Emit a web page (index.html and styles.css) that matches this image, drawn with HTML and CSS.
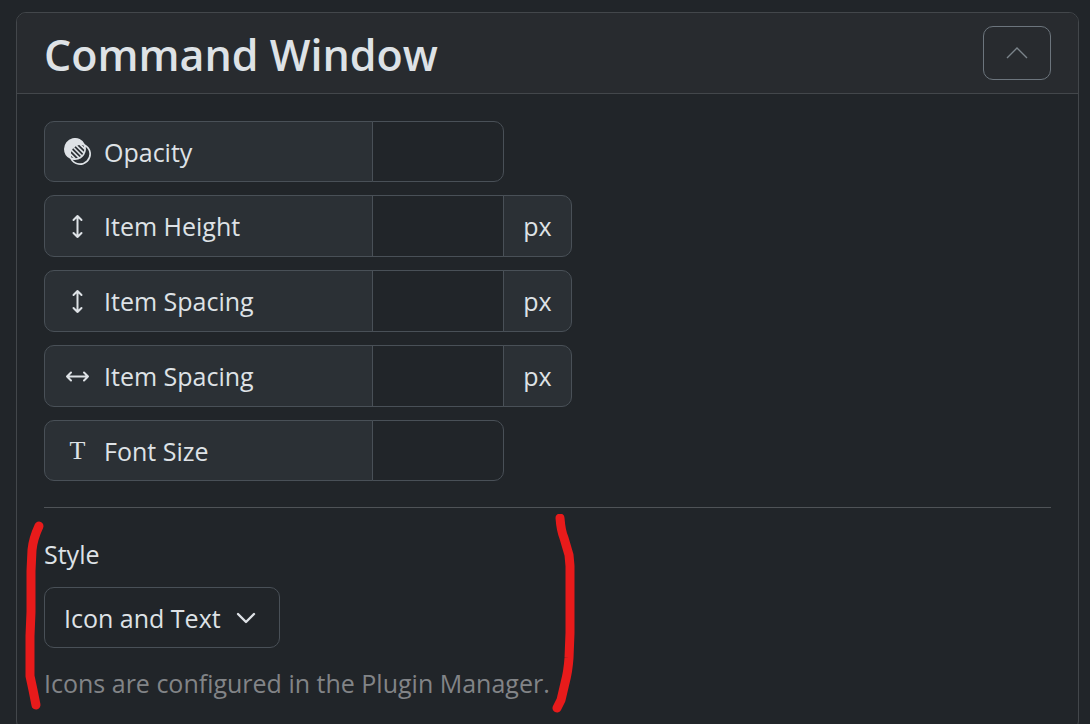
FILE: index.html
```html
<!DOCTYPE html>
<html lang="en">
<head>
    <meta charset="UTF-8">
    <meta name="viewport" content="width=device-width, initial-scale=1.0">
    <title>Command Window</title>
    <link rel="stylesheet" href="styles.css">
</head>
<body>
    <section class="card">
        <header class="card-header">
            <h1>Command Window</h1>
            <button type="button" class="collapse-btn" aria-label="Collapse">
                <svg width="28" height="28" viewBox="0 0 28 28"><path d="M4 19 14 9l10 10"/></svg>
            </button>
        </header>
        <div class="card-body">
            <form class="fields">
                <div class="input-group">
                    <label for="opacity">
                        <svg class="icon" viewBox="0 0 16 16"><path d="M0 6.5a6.5 6.5 0 0 1 12.346-2.846 6.5 6.5 0 1 1-8.691 8.691A6.5 6.5 0 0 1 0 6.5m5.144 6.358a5.5 5.5 0 1 0 7.714-7.714 6.5 6.5 0 0 1-7.714 7.714m-.733-1.269q.546.226 1.144.33l-1.474-1.474q.104.597.33 1.144m2.614.386a5.5 5.5 0 0 0 1.173-.242L4.374 7.91a6 6 0 0 0-.296 1.118zm2.157-.672q.446-.25.838-.576L5.418 6.126a6 6 0 0 0-.587.826zm1.545-1.284q.325-.39.576-.837L6.953 4.83a6 6 0 0 0-.827.587l4.6 4.602Zm1.006-1.822q.183-.562.242-1.172L9.028 4.078q-.58.096-1.118.296l3.823 3.824Zm.186-2.642a5.5 5.5 0 0 0-.33-1.144 5.5 5.5 0 0 0-1.144-.33z"/></svg>
                        Opacity
                    </label>
                    <input type="text" id="opacity">
                </div>
                <div class="input-group has-unit">
                    <label for="item-height">
                        <svg class="icon line" viewBox="0 0 27 27"><path d="M13.5 3v21M9.5 7l4-4 4 4M9.5 20l4 4 4-4"/></svg>
                        Item Height
                    </label>
                    <input type="text" id="item-height">
                    <span class="unit">px</span>
                </div>
                <div class="input-group has-unit">
                    <label for="spacing-y">
                        <svg class="icon line" viewBox="0 0 27 27"><path d="M13.5 3v21M9.5 7l4-4 4 4M9.5 20l4 4 4-4"/></svg>
                        Item Spacing
                    </label>
                    <input type="text" id="spacing-y">
                    <span class="unit">px</span>
                </div>
                <div class="input-group has-unit">
                    <label for="spacing-x">
                        <svg class="icon line" viewBox="0 0 27 27"><path d="M3 13.5h21M7 9.5l-4 4 4 4M20 9.5l4 4-4 4"/></svg>
                        Item Spacing
                    </label>
                    <input type="text" id="spacing-x">
                    <span class="unit">px</span>
                </div>
                <div class="input-group">
                    <label for="font-size">
                        <span class="icon type-icon" aria-hidden="true">T</span>
                        Font Size
                    </label>
                    <input type="text" id="font-size">
                </div>
            </form>
            <hr>
            <div class="style-field">
                <label for="style">Style</label>
                <div class="select-wrap">
                    <select id="style">
                        <option>Icon and Text</option>
                    </select>
                    <svg class="caret" viewBox="0 0 20 20"><path d="m2 6 8 8 8-8"/></svg>
                </div>
                <p class="help">Icons are configured in the Plugin Manager.</p>
                <svg class="marks" width="550" height="200" viewBox="0 0 550 200">
                    <path d="M14 12Q8 25 7 36L6 57V98L5 122V162L8 176 11 191"/>
                    <path d="M535 4Q536 17 539 24L544 41 545 52V119L544 144Q543 158 540 169L536 186 532 194"/>
                </svg>
            </div>
        </div>
    </section>
</body>
</html>
```
FILE: styles.css
```css
*{
    margin: 0;
    padding: 0;
    box-sizing: border-box;
}
body{
    padding: 12px 11px 0 16px;
    background-color: #212529;
    color: #dee2e6;
    font-family: "Open Sans", "Noto Sans", sans-serif;
    font-size: 25px;
    line-height: 40px;
}
input, select, button {
    font: inherit;
    color: inherit;
}
.card {
    border: 1px solid #43474b;
    border-radius: 10px;
}
.card-header {
    display: flex;
    justify-content: space-between;
    align-items: center;
    padding: 13px 27px;
    border-bottom: 1px solid #43474b;
    border-radius: 9px 9px 0 0;
    background-color: #282b2f;
}
h1 {
    padding-top: 4px;
    font-size: 43px;
    font-weight: 600;
    line-height: 50px;
}
.collapse-btn {
    display: flex;
    align-items: center;
    justify-content: center;
    width: 68px;
    height: 54px;
    border: 1px solid #6c757d;
    border-radius: 10px;
    background-color: transparent;
    cursor: pointer;
}
.collapse-btn svg {
    fill: none;
    stroke: #7b848b;
    stroke-width: 1.4;
}
.card-body {
    padding: 27px;
}
.fields {
    display: grid;
    gap: 13px;
}
.input-group {
    display: flex;
    height: 61px;
}
.input-group.has-unit {
    height: 62px;
}
.input-group label {
    display: flex;
    align-items: center;
    gap: 13px;
    width: 329px;
    padding: 0 19px;
    border: 1px solid #495057;
    border-radius: 10px 0 0 10px;
    background-color: #2b3035;
}
.input-group input {
    width: 132px;
    margin-left: -1px;
    padding: 0 19px;
    border: 1px solid #495057;
    border-radius: 0 10px 10px 0;
    background-color: #212529;
}
.has-unit input {
    border-radius: 0;
}
.unit {
    display: flex;
    align-items: center;
    justify-content: center;
    width: 69px;
    margin-left: -1px;
    border: 1px solid #495057;
    border-radius: 0 10px 10px 0;
    background-color: #2b3035;
}
.icon {
    width: 27px;
    height: 27px;
    fill: currentColor;
}
.line {
    fill: none;
    stroke: currentColor;
    stroke-width: 2;
    stroke-linecap: round;
    stroke-linejoin: round;
}
.type-icon {
    font-family: "Liberation Serif", serif;
    font-size: 26px;
    line-height: 27px;
    text-align: center;
}
hr {
    margin: 26px 0;
    border: 0;
    border-top: 1px solid #4f5357;
}
.style-field {
    position: relative;
}
.style-field label {
    display: block;
    margin-bottom: 13px;
}
.select-wrap {
    position: relative;
    width: 236px;
    margin-bottom: 15px;
}
select {
    display: block;
    width: 100%;
    height: 61px;
    padding: 0 19px;
    border: 1px solid #495057;
    border-radius: 10px;
    background-color: #212529;
    appearance: none;
}
.caret {
    position: absolute;
    top: 21px;
    right: 24px;
    width: 20px;
    height: 20px;
    fill: none;
    stroke: #dee2e6;
    stroke-width: 2.4;
    stroke-linecap: round;
    stroke-linejoin: round;
    pointer-events: none;
}
.help {
    color: #828487;
}
/* hand drawn brackets around the style field */
.marks {
    position: absolute;
    top: -20px;
    left: -19px;
    fill: none;
    stroke: #e81b1b;
    stroke-width: 9;
    stroke-linecap: round;
    stroke-linejoin: round;
    pointer-events: none;
}
```
